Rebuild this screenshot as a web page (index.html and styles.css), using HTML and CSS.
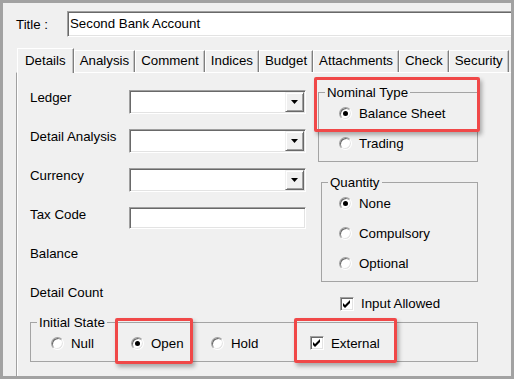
FILE: index.html
```html
<!DOCTYPE html>
<html lang="en">
<head>
    <meta charset="UTF-8">
    <title>Nominal Account</title>
    <link rel="stylesheet" href="styles.css">
</head>
<body>
    <div class="window">
        <div class="title-row">
            <span class="title-label">Title :</span>
            <div class="textbox title-box">Second Bank Account</div>
        </div>

        <div class="tabs">
            <div class="tab active">Details</div>
            <div class="tab">Analysis</div>
            <div class="tab">Comment</div>
            <div class="tab">Indices</div>
            <div class="tab">Budget</div>
            <div class="tab">Attachments</div>
            <div class="tab">Check</div>
            <div class="tab">Security</div>
        </div>

        <div class="panel">
            <div class="upper">
                <div class="fields">
                    <div class="row">
                        <span class="label">Ledger</span>
                        <div class="combo"><span class="drop"><svg width="7" height="4" viewBox="0 0 7 4"><polygon points="0,0 7,0 3.5,4" fill="#000"/></svg></span></div>
                    </div>
                    <div class="row">
                        <span class="label">Detail Analysis</span>
                        <div class="combo"><span class="drop"><svg width="7" height="4" viewBox="0 0 7 4"><polygon points="0,0 7,0 3.5,4" fill="#000"/></svg></span></div>
                    </div>
                    <div class="row">
                        <span class="label">Currency</span>
                        <div class="combo"><span class="drop"><svg width="7" height="4" viewBox="0 0 7 4"><polygon points="0,0 7,0 3.5,4" fill="#000"/></svg></span></div>
                    </div>
                    <div class="row">
                        <span class="label">Tax Code</span>
                        <div class="textbox tax-box"></div>
                    </div>
                    <div class="row">
                        <span class="label">Balance</span>
                    </div>
                    <div class="row last">
                        <span class="label">Detail Count</span>
                    </div>
                </div>

                <div class="side">
                    <fieldset class="group nominal">
                        <legend>Nominal Type</legend>
                        <div class="options">
                            <div class="opt"><span class="radio on"></span>Balance Sheet</div>
                            <div class="opt"><span class="radio"></span>Trading</div>
                        </div>
                    </fieldset>
                    <fieldset class="group quantity">
                        <legend>Quantity</legend>
                        <div class="options">
                            <div class="opt"><span class="radio on"></span>None</div>
                            <div class="opt"><span class="radio"></span>Compulsory</div>
                            <div class="opt"><span class="radio"></span>Optional</div>
                        </div>
                    </fieldset>
                    <div class="opt allowed"><span class="check"><svg width="12" height="12" viewBox="0 0 12 12"><polygon points="2,5 4,7 9,2 9,5 4,10 2,8" fill="#000"/></svg></span>Input Allowed</div>
                </div>
            </div>

            <fieldset class="group state">
                <legend>Initial State</legend>
                <div class="options inline">
                    <div class="opt"><span class="radio"></span>Null</div>
                    <div class="opt"><span class="radio on"></span>Open</div>
                    <div class="opt wide"><span class="radio"></span>Hold</div>
                    <div class="opt"><span class="check"><svg width="12" height="12" viewBox="0 0 12 12"><polygon points="2,5 4,7 9,2 9,5 4,10 2,8" fill="#000"/></svg></span>External</div>
                </div>
            </fieldset>
        </div>

        <div class="mark mark-nominal"></div>
        <div class="mark mark-open"></div>
        <div class="mark mark-external"></div>
    </div>
</body>
</html>
```

FILE: styles.css
```css
body {
    margin: 0;
    background: #f0f0f0;
    font-family: 'Liberation Sans', Arial, sans-serif;
    font-size: 13.3px;
    color: #000;
}

.window {
    position: relative;
    box-sizing: border-box;
    width: 514px;
    height: 379px;
    border: 3px solid #a2a2a2;
    background: #f0f0f0;
    display: flex;
    flex-direction: column;
    overflow: hidden;
}

/* title line */

.title-row {
    display: flex;
    align-items: center;
    height: 26px;
    margin-top: 8px;
    padding-left: 13px;
}

.title-label {
    width: 51px;
    line-height: 15px;
}

.textbox {
    box-sizing: border-box;
    background: #fff;
    border: 1px solid;
    border-color: #a0a0a0 #fff #fff #a0a0a0;
    box-shadow: inset 1px 1px 0 #696969, inset -1px -1px 0 #e3e3e3;
}

.title-box {
    flex: 1;
    height: 26px;
    margin-right: -4px;
    padding-left: 2px;
    line-height: 24px;
    white-space: nowrap;
}

/* tabs */

.tabs {
    display: flex;
    align-items: flex-end;
    height: 24px;
    margin-top: 11px;
    padding-left: 14px;
    white-space: nowrap;
}

.tab {
    box-sizing: border-box;
    height: 22px;
    padding: 2px 5px 0;
    line-height: 15px;
    border-top: 1px solid #fff;
    border-left: 1px solid #fff;
    border-right: 1px solid #7f7f7f;
    box-shadow: inset -1px 0 0 #c4c4c4;
}

.tab.active {
    position: relative;
    height: 25px;
    margin-bottom: -1px;
    padding: 4px 7px 0;
    background: #f0f0f0;
}

/* page */

.panel {
    flex: 1;
    margin-left: 13px;
    padding: 16px 0 0 13px;
    border-top: 1px solid #fff;
    border-left: 1px solid #a0a0a0;
    box-shadow: inset 1px 0 0 #fff;
}

.upper {
    display: flex;
    gap: 12px;
}

.fields {
    width: 276px;
}

.row {
    display: flex;
    align-items: flex-start;
    height: 39px;
}

.row.last {
    height: 31px;
}

.label {
    width: 99px;
    margin-top: 1px;
    line-height: 15px;
}

.combo {
    box-sizing: border-box;
    display: flex;
    justify-content: flex-end;
    width: 177px;
    height: 24px;
    margin-top: 1px;
    padding: 1px;
    background: #fff;
    border: 1px solid;
    border-color: #a0a0a0 #fff #fff #a0a0a0;
    box-shadow: inset 1px 1px 0 #696969, inset -1px -1px 0 #e3e3e3;
}

.drop {
    box-sizing: border-box;
    display: flex;
    align-items: center;
    justify-content: center;
    width: 19px;
    height: 20px;
    background: #f0f0f0;
    border: 1px solid;
    border-color: #f0f0f0 #696969 #696969 #f0f0f0;
    box-shadow: inset 1px 1px 0 #fff, inset -1px -1px 0 #a0a0a0;
}

.tax-box {
    width: 178px;
    height: 22px;
    margin-top: 1px;
}

/* group boxes */

.group {
    box-sizing: border-box;
    margin: 0;
    padding: 0 6px 5px;
    border: 1px solid #a4a4a4;
}

.group legend {
    padding: 0 2px;
    line-height: 15px;
}

.options {
    display: flex;
    flex-direction: column;
    gap: 4px;
}

.opt {
    display: flex;
    align-items: center;
    height: 26px;
    line-height: 15px;
    white-space: nowrap;
}

.side {
    width: 160px;
}

.nominal {
    width: 160px;
    margin-top: -4px;
}

.nominal .options {
    padding-left: 14px;
}

.quantity {
    width: 157px;
    margin-top: 13px;
    margin-left: 3px;
}

.quantity .options {
    padding-left: 11px;
}

.allowed {
    height: 15px;
    margin-top: 14px;
    margin-left: 22px;
}

.state {
    width: 448px;
}

.options.inline {
    flex-direction: row;
    gap: 0;
    padding-left: 14px;
}

.options.inline .opt {
    width: 80px;
}

.options.inline .opt.wide {
    width: 99px;
}

/* radio and check marks */

.radio {
    position: relative;
    box-sizing: border-box;
    flex: none;
    width: 13px;
    height: 13px;
    margin-right: 7px;
    border-radius: 50%;
    background: #fff;
    border: 1px solid;
    border-color: #a0a0a0 #fff #fff #a0a0a0;
    box-shadow: inset 1px 1px 0 #696969, inset -1px -1px 0 #e3e3e3;
}

.radio.on::after {
    content: "";
    position: absolute;
    left: 3px;
    top: 3px;
    width: 5px;
    height: 5px;
    border-radius: 50%;
    background: #000;
}

.check {
    box-sizing: border-box;
    flex: none;
    width: 14px;
    height: 14px;
    margin-right: 7px;
    background: #fff;
    border: 1px solid;
    border-color: #a0a0a0 #fff #fff #a0a0a0;
    box-shadow: inset 1px 1px 0 #696969, inset -1px -1px 0 #e3e3e3;
}

.check svg {
    display: block;
}

/* red call-outs drawn over the form */

.mark {
    position: absolute;
    box-sizing: border-box;
    border: 3px solid #f04848;
    border-radius: 2px;
    box-shadow: 2px 3px 4px rgba(0, 0, 0, 0.3);
}

.mark-nominal {
    left: 311px;
    top: 74px;
    width: 166px;
    height: 55px;
}

.mark-open {
    left: 112px;
    top: 315px;
    width: 78px;
    height: 46px;
}

.mark-external {
    left: 291px;
    top: 315px;
    width: 103px;
    height: 45px;
}
```
